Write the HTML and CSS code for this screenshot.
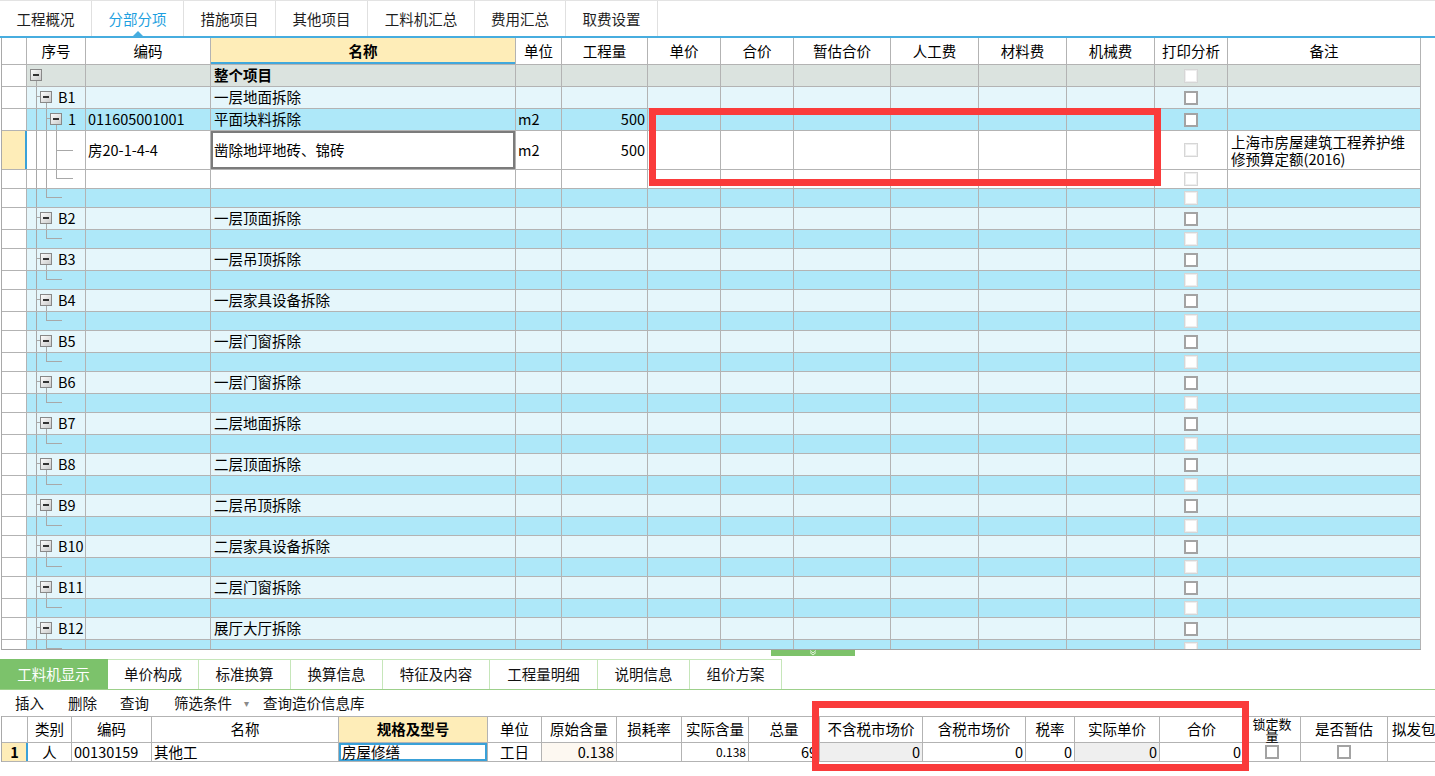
FILE: index.html
```
<!DOCTYPE html>
<html lang="zh-CN">
<head>
<meta charset="utf-8">
<title>分部分项</title>
<link rel="stylesheet" href="styles.css">
</head>
<body>
<svg class="defs" width="0" height="0" aria-hidden="true">
  <defs>
    <linearGradient id="bx" x1="0" y1="0" x2="1" y2="1">
      <stop offset="0" stop-color="#ffffff"/>
      <stop offset="1" stop-color="#c8c8c8"/>
    </linearGradient>
    <symbol id="t-top" viewBox="0 0 20 21">
      <line x1="9.5" y1="16" x2="9.5" y2="21" stroke="#a8a8a8"/>
      <rect x="3.5" y="4.5" width="11" height="11" fill="url(#bx)" stroke="#888"/>
      <rect x="6" y="9" width="6" height="2" fill="#333"/>
    </symbol>
    <symbol id="t-b" viewBox="0 0 28 21">
      <line x1="9.5" y1="0" x2="9.5" y2="21" stroke="#a8a8a8"/>
      <line x1="10" y1="9.5" x2="13" y2="9.5" stroke="#a8a8a8"/>
      <line x1="19.5" y1="16" x2="19.5" y2="21" stroke="#a8a8a8"/>
      <rect x="13.5" y="4.5" width="11" height="11" fill="url(#bx)" stroke="#888"/>
      <rect x="16" y="9" width="6" height="2" fill="#333"/>
    </symbol>
    <symbol id="t-i" viewBox="0 0 38 21">
      <line x1="9.5" y1="0" x2="9.5" y2="21" stroke="#a8a8a8"/>
      <line x1="19.5" y1="0" x2="19.5" y2="21" stroke="#a8a8a8"/>
      <line x1="20" y1="9.5" x2="23" y2="9.5" stroke="#a8a8a8"/>
      <line x1="29.5" y1="16" x2="29.5" y2="21" stroke="#a8a8a8"/>
      <rect x="23.5" y="4.5" width="11" height="11" fill="url(#bx)" stroke="#888"/>
      <rect x="26" y="9" width="6" height="2" fill="#333"/>
    </symbol>
    <symbol id="t-q" viewBox="0 0 58 38">
      <line x1="9.5" y1="0" x2="9.5" y2="38" stroke="#a8a8a8"/>
      <line x1="19.5" y1="0" x2="19.5" y2="38" stroke="#a8a8a8"/>
      <line x1="29.5" y1="0" x2="29.5" y2="38" stroke="#a8a8a8"/>
      <line x1="30" y1="19.5" x2="46" y2="19.5" stroke="#a8a8a8"/>
    </symbol>
    <symbol id="t-ie" viewBox="0 0 58 18">
      <line x1="9.5" y1="0" x2="9.5" y2="18" stroke="#a8a8a8"/>
      <line x1="19.5" y1="0" x2="19.5" y2="18" stroke="#a8a8a8"/>
      <line x1="29.5" y1="0" x2="29.5" y2="9" stroke="#a8a8a8"/>
      <line x1="30" y1="8.5" x2="46" y2="8.5" stroke="#a8a8a8"/>
    </symbol>
    <symbol id="t-be" viewBox="0 0 58 18">
      <line x1="9.5" y1="0" x2="9.5" y2="18" stroke="#a8a8a8"/>
      <line x1="19.5" y1="0" x2="19.5" y2="9" stroke="#a8a8a8"/>
      <line x1="20" y1="8.5" x2="35" y2="8.5" stroke="#a8a8a8"/>
    </symbol>
  </defs>
</svg>

<div class="app">
  <nav class="tabs">
    <div class="tab">工程概况</div>
    <div class="tab on">分部分项</div>
    <div class="tab">措施项目</div>
    <div class="tab">其他项目</div>
    <div class="tab w107">工料机汇总</div>
    <div class="tab w91">费用汇总</div>
    <div class="tab">取费设置</div>
  </nav>

  <section class="grid main">
    <div class="r hdr">
      <div class="c"></div>
      <div class="c">序号</div>
      <div class="c">编码</div>
      <div class="c nmh">名称</div>
      <div class="c">单位</div>
      <div class="c">工程量</div>
      <div class="c">单价</div>
      <div class="c">合价</div>
      <div class="c">暂估合价</div>
      <div class="c">人工费</div>
      <div class="c">材料费</div>
      <div class="c">机械费</div>
      <div class="c">打印分析</div>
      <div class="c">备注</div>
    </div>
    <div class="body">
      <div class="r top">
        <div class="c"></div>
        <div class="c tree"><svg width="20" height="21"><use href="#t-top"/></svg></div>
        <div class="c"></div>
        <div class="c nm b">整个项目</div>
        <div class="c"></div><div class="c"></div><div class="c"></div><div class="c"></div>
        <div class="c"></div><div class="c"></div><div class="c"></div><div class="c"></div>
        <div class="c ck"><i class="cb off"></i></div>
        <div class="c"></div>
      </div>
      <div class="r lt">
        <div class="c"></div>
        <div class="c tree"><svg width="28" height="21"><use href="#t-b"/></svg><span class="lb">B1</span></div>
        <div class="c"></div>
        <div class="c nm">一层地面拆除</div>
        <div class="c"></div><div class="c"></div><div class="c"></div><div class="c"></div>
        <div class="c"></div><div class="c"></div><div class="c"></div><div class="c"></div>
        <div class="c ck"><i class="cb"></i></div>
        <div class="c"></div>
      </div>
      <div class="r dk">
        <div class="c"></div>
        <div class="c tree"><svg width="38" height="21"><use href="#t-i"/></svg><span class="lb">1</span></div>
        <div class="c">011605001001</div>
        <div class="c nm">平面块料拆除</div>
        <div class="c">m2</div>
        <div class="c num">500</div>
        <div class="c"></div><div class="c"></div><div class="c"></div><div class="c"></div>
        <div class="c"></div><div class="c"></div>
        <div class="c ck"><i class="cb"></i></div>
        <div class="c"></div>
      </div>
      <div class="r wh q">
        <div class="c cur"></div>
        <div class="c tree"><svg width="58" height="38"><use href="#t-q"/></svg></div>
        <div class="c">房20-1-4-4</div>
        <div class="c nm focus">凿除地坪地砖、锦砖</div>
        <div class="c">m2</div>
        <div class="c num">500</div>
        <div class="c"></div><div class="c"></div><div class="c"></div><div class="c"></div>
        <div class="c"></div><div class="c"></div>
        <div class="c ck"><i class="cb off"></i></div>
        <div class="c note">上海市房屋建筑工程养护维修预算定额(2016)</div>
      </div>
      <div class="r wh sh">
        <div class="c"></div>
        <div class="c tree"><svg width="58" height="18"><use href="#t-ie"/></svg></div>
        <div class="c"></div><div class="c"></div>
        <div class="c"></div><div class="c"></div><div class="c"></div><div class="c"></div>
        <div class="c"></div><div class="c"></div><div class="c"></div><div class="c"></div>
        <div class="c ck"><i class="cb off"></i></div>
        <div class="c"></div>
      </div>
      <div class="r dk sh">
        <div class="c"></div>
        <div class="c tree"><svg width="58" height="18"><use href="#t-be"/></svg></div>
        <div class="c"></div><div class="c"></div>
        <div class="c"></div><div class="c"></div><div class="c"></div><div class="c"></div>
        <div class="c"></div><div class="c"></div><div class="c"></div><div class="c"></div>
        <div class="c ck"><i class="cb off"></i></div>
        <div class="c"></div>
      </div>

      <div class="r lt"><div class="c"></div><div class="c tree"><svg width="28" height="21"><use href="#t-b"/></svg><span class="lb">B2</span></div><div class="c"></div><div class="c nm">一层顶面拆除</div><div class="c"></div><div class="c"></div><div class="c"></div><div class="c"></div><div class="c"></div><div class="c"></div><div class="c"></div><div class="c"></div><div class="c ck"><i class="cb"></i></div><div class="c"></div></div>
      <div class="r dk sh"><div class="c"></div><div class="c tree"><svg width="58" height="18"><use href="#t-be"/></svg></div><div class="c"></div><div class="c"></div><div class="c"></div><div class="c"></div><div class="c"></div><div class="c"></div><div class="c"></div><div class="c"></div><div class="c"></div><div class="c"></div><div class="c ck"><i class="cb off"></i></div><div class="c"></div></div>

      <div class="r lt"><div class="c"></div><div class="c tree"><svg width="28" height="21"><use href="#t-b"/></svg><span class="lb">B3</span></div><div class="c"></div><div class="c nm">一层吊顶拆除</div><div class="c"></div><div class="c"></div><div class="c"></div><div class="c"></div><div class="c"></div><div class="c"></div><div class="c"></div><div class="c"></div><div class="c ck"><i class="cb"></i></div><div class="c"></div></div>
      <div class="r dk sh"><div class="c"></div><div class="c tree"><svg width="58" height="18"><use href="#t-be"/></svg></div><div class="c"></div><div class="c"></div><div class="c"></div><div class="c"></div><div class="c"></div><div class="c"></div><div class="c"></div><div class="c"></div><div class="c"></div><div class="c"></div><div class="c ck"><i class="cb off"></i></div><div class="c"></div></div>

      <div class="r lt"><div class="c"></div><div class="c tree"><svg width="28" height="21"><use href="#t-b"/></svg><span class="lb">B4</span></div><div class="c"></div><div class="c nm">一层家具设备拆除</div><div class="c"></div><div class="c"></div><div class="c"></div><div class="c"></div><div class="c"></div><div class="c"></div><div class="c"></div><div class="c"></div><div class="c ck"><i class="cb"></i></div><div class="c"></div></div>
      <div class="r dk sh"><div class="c"></div><div class="c tree"><svg width="58" height="18"><use href="#t-be"/></svg></div><div class="c"></div><div class="c"></div><div class="c"></div><div class="c"></div><div class="c"></div><div class="c"></div><div class="c"></div><div class="c"></div><div class="c"></div><div class="c"></div><div class="c ck"><i class="cb off"></i></div><div class="c"></div></div>

      <div class="r lt"><div class="c"></div><div class="c tree"><svg width="28" height="21"><use href="#t-b"/></svg><span class="lb">B5</span></div><div class="c"></div><div class="c nm">一层门窗拆除</div><div class="c"></div><div class="c"></div><div class="c"></div><div class="c"></div><div class="c"></div><div class="c"></div><div class="c"></div><div class="c"></div><div class="c ck"><i class="cb"></i></div><div class="c"></div></div>
      <div class="r dk sh"><div class="c"></div><div class="c tree"><svg width="58" height="18"><use href="#t-be"/></svg></div><div class="c"></div><div class="c"></div><div class="c"></div><div class="c"></div><div class="c"></div><div class="c"></div><div class="c"></div><div class="c"></div><div class="c"></div><div class="c"></div><div class="c ck"><i class="cb off"></i></div><div class="c"></div></div>

      <div class="r lt"><div class="c"></div><div class="c tree"><svg width="28" height="21"><use href="#t-b"/></svg><span class="lb">B6</span></div><div class="c"></div><div class="c nm">一层门窗拆除</div><div class="c"></div><div class="c"></div><div class="c"></div><div class="c"></div><div class="c"></div><div class="c"></div><div class="c"></div><div class="c"></div><div class="c ck"><i class="cb"></i></div><div class="c"></div></div>
      <div class="r dk sh"><div class="c"></div><div class="c tree"><svg width="58" height="18"><use href="#t-be"/></svg></div><div class="c"></div><div class="c"></div><div class="c"></div><div class="c"></div><div class="c"></div><div class="c"></div><div class="c"></div><div class="c"></div><div class="c"></div><div class="c"></div><div class="c ck"><i class="cb off"></i></div><div class="c"></div></div>

      <div class="r lt"><div class="c"></div><div class="c tree"><svg width="28" height="21"><use href="#t-b"/></svg><span class="lb">B7</span></div><div class="c"></div><div class="c nm">二层地面拆除</div><div class="c"></div><div class="c"></div><div class="c"></div><div class="c"></div><div class="c"></div><div class="c"></div><div class="c"></div><div class="c"></div><div class="c ck"><i class="cb"></i></div><div class="c"></div></div>
      <div class="r dk sh"><div class="c"></div><div class="c tree"><svg width="58" height="18"><use href="#t-be"/></svg></div><div class="c"></div><div class="c"></div><div class="c"></div><div class="c"></div><div class="c"></div><div class="c"></div><div class="c"></div><div class="c"></div><div class="c"></div><div class="c"></div><div class="c ck"><i class="cb off"></i></div><div class="c"></div></div>

      <div class="r lt"><div class="c"></div><div class="c tree"><svg width="28" height="21"><use href="#t-b"/></svg><span class="lb">B8</span></div><div class="c"></div><div class="c nm">二层顶面拆除</div><div class="c"></div><div class="c"></div><div class="c"></div><div class="c"></div><div class="c"></div><div class="c"></div><div class="c"></div><div class="c"></div><div class="c ck"><i class="cb"></i></div><div class="c"></div></div>
      <div class="r dk sh"><div class="c"></div><div class="c tree"><svg width="58" height="18"><use href="#t-be"/></svg></div><div class="c"></div><div class="c"></div><div class="c"></div><div class="c"></div><div class="c"></div><div class="c"></div><div class="c"></div><div class="c"></div><div class="c"></div><div class="c"></div><div class="c ck"><i class="cb off"></i></div><div class="c"></div></div>

      <div class="r lt"><div class="c"></div><div class="c tree"><svg width="28" height="21"><use href="#t-b"/></svg><span class="lb">B9</span></div><div class="c"></div><div class="c nm">二层吊顶拆除</div><div class="c"></div><div class="c"></div><div class="c"></div><div class="c"></div><div class="c"></div><div class="c"></div><div class="c"></div><div class="c"></div><div class="c ck"><i class="cb"></i></div><div class="c"></div></div>
      <div class="r dk sh"><div class="c"></div><div class="c tree"><svg width="58" height="18"><use href="#t-be"/></svg></div><div class="c"></div><div class="c"></div><div class="c"></div><div class="c"></div><div class="c"></div><div class="c"></div><div class="c"></div><div class="c"></div><div class="c"></div><div class="c"></div><div class="c ck"><i class="cb off"></i></div><div class="c"></div></div>

      <div class="r lt"><div class="c"></div><div class="c tree"><svg width="28" height="21"><use href="#t-b"/></svg><span class="lb">B10</span></div><div class="c"></div><div class="c nm">二层家具设备拆除</div><div class="c"></div><div class="c"></div><div class="c"></div><div class="c"></div><div class="c"></div><div class="c"></div><div class="c"></div><div class="c"></div><div class="c ck"><i class="cb"></i></div><div class="c"></div></div>
      <div class="r dk sh"><div class="c"></div><div class="c tree"><svg width="58" height="18"><use href="#t-be"/></svg></div><div class="c"></div><div class="c"></div><div class="c"></div><div class="c"></div><div class="c"></div><div class="c"></div><div class="c"></div><div class="c"></div><div class="c"></div><div class="c"></div><div class="c ck"><i class="cb off"></i></div><div class="c"></div></div>

      <div class="r lt"><div class="c"></div><div class="c tree"><svg width="28" height="21"><use href="#t-b"/></svg><span class="lb">B11</span></div><div class="c"></div><div class="c nm">二层门窗拆除</div><div class="c"></div><div class="c"></div><div class="c"></div><div class="c"></div><div class="c"></div><div class="c"></div><div class="c"></div><div class="c"></div><div class="c ck"><i class="cb"></i></div><div class="c"></div></div>
      <div class="r dk sh"><div class="c"></div><div class="c tree"><svg width="58" height="18"><use href="#t-be"/></svg></div><div class="c"></div><div class="c"></div><div class="c"></div><div class="c"></div><div class="c"></div><div class="c"></div><div class="c"></div><div class="c"></div><div class="c"></div><div class="c"></div><div class="c ck"><i class="cb off"></i></div><div class="c"></div></div>

      <div class="r lt"><div class="c"></div><div class="c tree"><svg width="28" height="21"><use href="#t-b"/></svg><span class="lb">B12</span></div><div class="c"></div><div class="c nm">展厅大厅拆除</div><div class="c"></div><div class="c"></div><div class="c"></div><div class="c"></div><div class="c"></div><div class="c"></div><div class="c"></div><div class="c"></div><div class="c ck"><i class="cb"></i></div><div class="c"></div></div>
      <div class="r dk sh"><div class="c"></div><div class="c tree"><svg width="58" height="18"><use href="#t-be"/></svg></div><div class="c"></div><div class="c"></div><div class="c"></div><div class="c"></div><div class="c"></div><div class="c"></div><div class="c"></div><div class="c"></div><div class="c"></div><div class="c"></div><div class="c ck"><i class="cb off"></i></div><div class="c"></div></div>
    </div>
  </section>

  <div class="split"><span class="grip"><svg width="10" height="6" viewBox="0 0 10 6"><polyline points="2,0.5 5,3 8,0.5" fill="none" stroke="#e8f5e2" stroke-width="1"/><polyline points="2,2.5 5,5 8,2.5" fill="none" stroke="#e8f5e2" stroke-width="1"/></svg></span></div>

  <nav class="subtabs">
    <div class="st on w108">工料机显示</div>
    <div class="st w91">单价构成</div>
    <div class="st w92">标准换算</div>
    <div class="st w92">换算信息</div>
    <div class="st w107">特征及内容</div>
    <div class="st w108">工程量明细</div>
    <div class="st w92">说明信息</div>
    <div class="st w92">组价方案</div>
  </nav>

  <div class="toolbar">
    <span class="ti">插入</span>
    <span class="ti m23">删除</span>
    <span class="ti m25">查询</span>
    <span class="ti m14">筛选条件</span>
    <span class="arrow">▾</span>
    <span class="ti">查询造价信息库</span>
  </div>

  <section class="grid sub">
    <div class="r hdr">
      <div class="c"></div>
      <div class="c">类别</div>
      <div class="c">编码</div>
      <div class="c">名称</div>
      <div class="c nmh">规格及型号</div>
      <div class="c">单位</div>
      <div class="c">原始含量</div>
      <div class="c">损耗率</div>
      <div class="c">实际含量</div>
      <div class="c">总量</div>
      <div class="c">不含税市场价</div>
      <div class="c">含税市场价</div>
      <div class="c">税率</div>
      <div class="c">实际单价</div>
      <div class="c">合价</div>
      <div class="c wrap">锁定数量</div>
      <div class="c">是否暂估</div>
      <div class="c left">拟发包</div>
    </div>
    <div class="r wh d">
      <div class="c cur ctr b">1</div>
      <div class="c ctr">人</div>
      <div class="c">00130159</div>
      <div class="c">其他工</div>
      <div class="c sel">房屋修缮</div>
      <div class="c ctr">工日</div>
      <div class="c num cream">0.138</div>
      <div class="c"></div>
      <div class="c num small">0.138</div>
      <div class="c num">69</div>
      <div class="c num gray">0</div>
      <div class="c num">0</div>
      <div class="c num">0</div>
      <div class="c num gray">0</div>
      <div class="c num">0</div>
      <div class="c ck"><i class="cb"></i></div>
      <div class="c ck"><i class="cb"></i></div>
      <div class="c"></div>
    </div>
  </section>

  <div class="mark m1"></div>
  <div class="mark m2"></div>
</div>
</body>
</html>
```

FILE: styles.css
```
* { box-sizing: border-box; margin: 0; padding: 0; }

html, body {
  width: 1435px;
  height: 776px;
  overflow: hidden;
  background: #fff;
}

body {
  font-family: "Noto Sans CJK SC", "Noto Sans", sans-serif;
  font-size: 14.5px;
  line-height: 1;
  color: #000;
}

.defs { position: absolute; width: 0; height: 0; }

.app {
  position: relative;
  width: 1435px;
  height: 776px;
  overflow: hidden;
}

/* top tabs */
.tabs {
  display: flex;
  height: 38px;
  border-top: 1px solid #e3e3e3;
  border-bottom: 2px solid #47addf;
}

.tab {
  position: relative;
  width: 92px;
  display: flex;
  align-items: center;
  justify-content: center;
  border-right: 1px solid #e0e0e0;
  color: #1e1e1e;
  padding-top: 2px;
}

.tab.w107 { width: 107px; }
.tab.w91 { width: 91px; }

.tab.on { color: #1d9fe0; }

.tab.on::after {
  content: "";
  position: absolute;
  left: 50%;
  bottom: 0;
  margin-left: -5px;
  border-left: 5px solid transparent;
  border-right: 5px solid transparent;
  border-bottom: 5px solid #47addf;
}

/* grids */
.grid {
  margin-left: 1px;
  border-left: 1px solid #a9a9a9;
}

.main { width: 1420px; }
.sub { width: 1447px; }

.main .r {
  grid-template-columns: 25px 59px 125px 305px 46px 86px 73px 73px 97px 88px 88px 88px 73px 193px;
}

.sub .r {
  grid-template-columns: 26px 44px 80px 187px 149px 54px 75px 65px 67px 71px 103px 103px 49px 85px 84px 57px 87px 60px;
}

.r {
  display: grid;
  height: 22px;
  border-bottom: 1px solid #b3b3b3;
}

.r.sh { height: 19px; }
.r.q { height: 39px; }
.r.hdr { height: 27px; background: #fff; }
.sub .r.hdr { border-top: 1px solid #b3b3b3; }
.r.d { height: 19px; }

.c {
  display: flex;
  align-items: center;
  min-width: 0;
  padding: 0 2px;
  border-right: 1px solid #b3b3b3;
  white-space: nowrap;
}

.r > .c:first-child { background: #fff; }

.hdr .c { justify-content: center; }

.nmh {
  background: #feedb8;
  font-weight: bold;
}

.main .nmh { box-shadow: inset 0 -2px 0 #41a8dc; }

.body {
  height: 585px;
  overflow: hidden;
  border-bottom: 1px solid #a3a3a3;
}

.top { background: #dbe3df; }
.lt { background: #e5f6fb; }
.dk { background: #aee8f9; }
.wh { background: #fff; }

.r > .c.cur {
  background: #feedb8;
  border-right-color: #3aa1d8;
  box-shadow: inset -1px 0 0 #3aa1d8;
}

.tree { padding: 0; align-items: stretch; overflow: hidden; }
.tree svg { display: block; flex-shrink: 0; }
.tree .lb { margin-left: 3px; align-self: center; }

.nm { padding: 0 3px; }
.b { font-weight: bold; }

.focus { box-shadow: inset 0 0 0 2px #7b7b7b; }

.num { justify-content: flex-end; }
.ctr { justify-content: center; }

.ck { justify-content: center; }

.cb {
  display: block;
  width: 14px;
  height: 14px;
  background: #fff;
  border: 2px solid #a3a3a3;
}

.cb.off {
  border: 1px solid #d6d6d6;
  box-shadow: inset 0 0 0 1px #eeeeee;
}

.note {
  white-space: normal;
  line-height: 17px;
  padding: 0 3px;
}

/* splitter */
.split {
  height: 9px;
  padding-left: 771px;
}

.grip {
  display: flex;
  justify-content: center;
  width: 84px;
  height: 6px;
  background: #7dc26a;
}

.grip svg { display: block; }

/* sub tabs */
.subtabs {
  display: flex;
  height: 31px;
  border-bottom: 1px solid #9dd08b;
}

.st {
  height: 30px;
  display: flex;
  align-items: center;
  justify-content: center;
  border-top: 1px solid #c6e6ba;
  border-right: 1px solid #c6e6ba;
  color: #111;
}

.st.w108 { width: 108px; }
.st.w107 { width: 107px; }
.st.w92 { width: 92px; }
.st.w91 { width: 91px; }

.st.on {
  background: #7cc26b;
  border-color: #7cc26b;
  color: #fff;
}

/* toolbar */
.toolbar {
  display: flex;
  align-items: center;
  height: 26px;
  padding-left: 15px;
  color: #111;
}

.ti { margin-right: 24px; }
.ti.m23 { margin-right: 23px; }
.ti.m25 { margin-right: 25px; }
.ti.m14 { margin-right: 12px; }

.arrow {
  font-size: 10px;
  color: #8a8a8a;
  margin-right: 14px;
}

/* lower table specifics */
.sel { box-shadow: inset 0 0 0 2px #3aa1d8; padding: 0 3px; }
.cream { background: #fdf8f1; }
.gray { background: #efefef; }
.small { font-size: 12px; }

.wrap {
  white-space: normal;
  text-align: center;
  padding: 0 4px;
  font-size: 13px;
  line-height: 12px;
}

.hdr .left { justify-content: flex-start; padding-left: 4px; }

/* annotation marks */
.mark {
  position: absolute;
  border: 7px solid #fa3b3b;
  pointer-events: none;
}

.m1 { left: 649px; top: 108px; width: 512px; height: 78px; }
.m2 { left: 812px; top: 701px; width: 437px; height: 70px; }
```
